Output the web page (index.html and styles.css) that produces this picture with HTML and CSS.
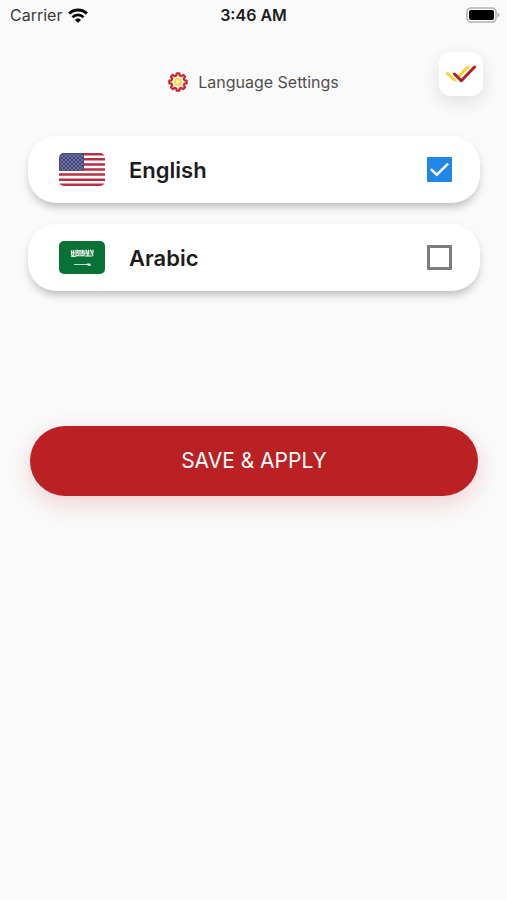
FILE: index.html
```html
<!DOCTYPE html>
<html lang="en">
<head>
<meta charset="utf-8">
<meta name="viewport" content="width=device-width, initial-scale=1">
<title>Language Settings</title>
<link rel="stylesheet" href="styles.css">
</head>
<body>
<div class="status">
  <div class="carrier">
    <span>Carrier</span>
    <svg class="wifi" viewBox="0 0 20 15" aria-hidden="true">
      <path d="M1.2 5.600a12.400 12.400 0 0 1 17.600 0" fill="none" stroke="#050505" stroke-width="3"/>
      <path d="M4.500 9.200a7.800 7.800 0 0 1 11 0" fill="none" stroke="#050505" stroke-width="2.700"/>
      <path d="M10 14.800 6.900 11.900a4.400 4.400 0 0 1 6.200 0z" fill="#050505"/>
    </svg>
  </div>
  <time class="clock">3:46 AM</time>
  <svg class="battery" viewBox="0 0 34 16" aria-hidden="true">
    <rect x="1" y="1" width="29" height="14" rx="4" fill="#fafafa" stroke="#b2b2b2" stroke-width="1.600"/>
    <rect x="3" y="3" width="25" height="10" rx="2" fill="#000"/>
    <path d="M31.500 5.500q2 .7 2 2.500t-2 2.500z" fill="#b2b2b2"/>
  </svg>
</div>

<main class="page">
  <header class="header">
    <h1 class="title">
      <svg class="gear" viewBox="0 0 20 20" aria-hidden="true">
        <path d="M8.300 3.500 8.700 1.300h2.600l.4 2.200 1.700.7 1.900-1.300 1.800 1.800-1.300 1.900.7 1.700 2.200.4v2.600l-2.200.4-.7 1.700 1.300 1.900-1.800 1.800-1.900-1.300-1.700.7-.4 2.200H8.700l-.4-2.200-1.700-.7-1.900 1.300-1.800-1.800 1.300-1.900-.7-1.700-2.200-.4V8.700l2.200-.4.7-1.700-1.300-1.900 1.800-1.800 1.900 1.300z" fill="#fff3ee" stroke="#c62a33" stroke-width="2.200" stroke-linejoin="round"/>
        <circle cx="10" cy="10" r="3" fill="#fff3a8" stroke="#fad84a" stroke-width="2"/>
      </svg>
      <span>Language Settings</span>
    </h1>
    <button class="confirm" type="button" aria-label="Confirm">
      <svg viewBox="0 0 30 18" aria-hidden="true">
        <path d="m1.500 8.500 7 6.500M13.500 10.500l8.500-8.500" fill="none" stroke="#f8d32d" stroke-width="3" stroke-linecap="round"/>
        <path d="m8.500 9 6.800 6.700L28.500 2" fill="none" stroke="#b01d2b" stroke-width="3" stroke-linecap="round" stroke-linejoin="round"/>
      </svg>
    </button>
  </header>

  <form class="form">
    <div class="languages">
      <label class="card">
        <svg class="flag" viewBox="0 0 46 33" aria-hidden="true">
          <defs>
            <pattern id="stars" width="4" height="4" patternUnits="userSpaceOnUse">
              <circle cx="1" cy="1" r=".65" fill="#b4b6d4"/>
              <circle cx="3" cy="3" r=".65" fill="#b4b6d4"/>
            </pattern>
          </defs>
          <path fill="#fff" d="M0 0h46v33H0z"/>
          <path d="M0 1.270h46M0 6.350h46M0 11.420h46M0 16.500h46M0 21.580h46M0 26.650h46M0 31.730h46" stroke="#b82f43" stroke-width="2.540"/>
          <path fill="#474a80" d="M0 0h25v17.800H0z"/>
          <path fill="url(#stars)" d="M1 1h23v16H1z"/>
        </svg>
        <span class="name">English</span>
        <input class="check" type="checkbox" checked>
      </label>
      <label class="card">
        <svg class="flag" viewBox="0 0 46 33" aria-hidden="true">
          <path fill="#087236" d="M0 0h46v33H0z"/>
          <path fill="#fff" fill-opacity=".25" d="M12 9h22v7H12z"/>
          <g fill="none" stroke="#d9eadf" stroke-linecap="round" stroke-width="1.200">
            <path d="M12.500 9.500v3.500q0 2 2 1.500v-5M13 11.500h2.500M17 9v5.500h3V10M18.500 9v3M22 9.500v5h3v-5M23.500 9v3.500M27 9l2 5.500M29.500 9v4M31.500 9l2.500 5.500M34 9v3M12.500 15.500h4M20 9.500h2M25.500 12h3M27 15h5"/>
            <path d="M15.500 23.500h13" stroke-width=".9"/>
            <path d="M28 23.200h3M29 24.200h2.500"/>
          </g>
        </svg>
        <span class="name">Arabic</span>
        <input class="check" type="checkbox">
      </label>
    </div>
    <button class="save" type="button">SAVE &amp; APPLY</button>
  </form>
</main>
</body>
</html>
```
FILE: styles.css
```css
* {
  box-sizing: border-box;
}

body {
  margin: 0;
  min-height: 100vh;
  background: #fafafa;
  color: #1c1c1c;
  font-family: Inter, "Liberation Sans", sans-serif;
}

.status {
  display: grid;
  grid-template-columns: 1fr auto 1fr;
  align-items: center;
  height: 30px;
  padding: 0 7px;
  font-size: 16px;
  line-height: 20px;
}

.carrier {
  display: flex;
  align-items: center;
  gap: 6px;
  padding-left: 3px;
  color: #3a3a3a;
}

.wifi {
  width: 20px;
  height: 15px;
}

.clock {
  font-weight: 600;
}

.battery {
  justify-self: end;
  width: 34px;
  height: 16px;
}

.page {
  padding: 22px 27px 0 28px;
}

.header {
  display: grid;
  grid-template-columns: 44px 1fr 44px;
  margin-right: -3px;
  margin-left: -4px;
}

.title {
  display: flex;
  grid-column: 2;
  align-items: center;
  justify-content: center;
  gap: 10px;
  height: 60px;
  margin: 0;
  color: #505050;
  font-size: 16px;
  font-weight: 400;
  line-height: 20px;
}

.gear {
  width: 20px;
  height: 20px;
}

.confirm {
  display: grid;
  place-items: center;
  width: 44px;
  height: 44px;
  padding: 0;
  border: 0;
  border-radius: 12px;
  background: #fff;
  box-shadow: 0 6px 18px rgb(0 0 0 / 11%);
}

.confirm svg {
  width: 30px;
  height: 18px;
}

.languages {
  display: grid;
  gap: 21px;
  margin-top: 24px;
}

.card {
  display: flex;
  align-items: center;
  gap: 24px;
  height: 67px;
  padding: 0 28px 0 31px;
  border-radius: 28px;
  background: #fff;
  box-shadow: 0 6px 8px -3px rgb(0 0 0 / 22%), 0 4px 12px rgb(0 0 0 / 7%);
}

.flag {
  width: 46px;
  height: 33px;
  border-radius: 5px;
}

.name {
  flex: 1;
  font-size: 22px;
  font-weight: 600;
  line-height: 28px;
}

.check {
  display: grid;
  place-items: center;
  width: 25px;
  height: 25px;
  margin: 0;
  border: 3px solid #7c7c7c;
  border-radius: 1px;
  background: #fff;
  appearance: none;
}

.check:checked {
  border-color: #2187e6;
  background: #2187e6;
}

.check:checked::before {
  width: 19px;
  height: 14px;
  background: #fff;
  clip-path: polygon(0 53%, 9% 41%, 36% 75%, 91% 2%, 100% 14%, 36% 100%);
  content: "";
}

.save {
  display: block;
  width: calc(100% - 4px);
  height: 70px;
  margin: 135px auto 0;
  border: 0;
  border-radius: 35px;
  background: #bb2022;
  box-shadow: 0 8px 24px rgb(187 32 34 / 18%);
  color: #fff;
  font-family: inherit;
  font-size: 21px;
  line-height: 28px;
}
```
